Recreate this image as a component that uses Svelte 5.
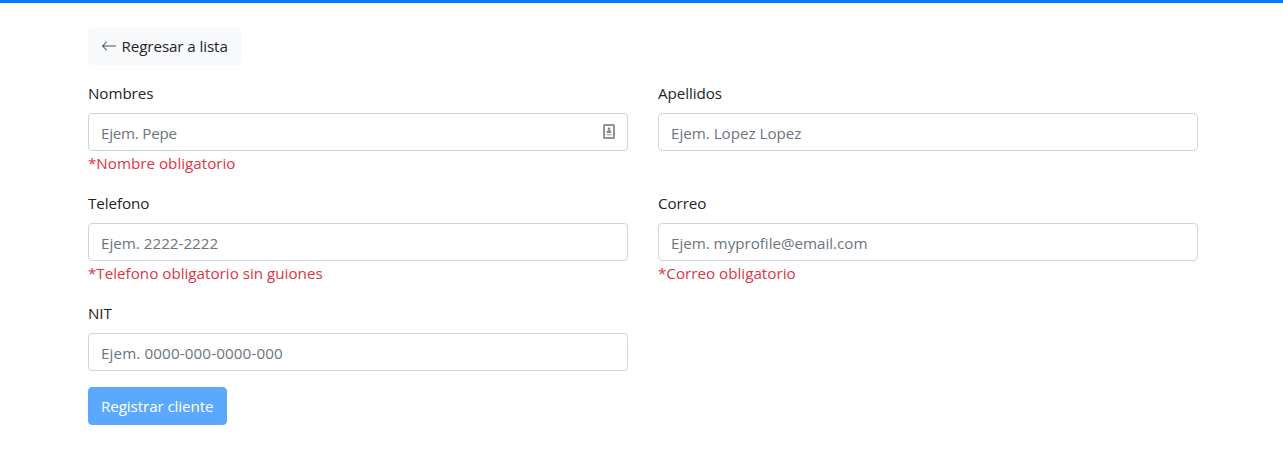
<script>
  const fields = [
    { id: 'nombres', label: 'Nombres', hint: 'Ejem. Pepe', track: -0.25, error: '*Nombre obligatorio', contact: true },
    { id: 'apellidos', label: 'Apellidos', hint: 'Ejem. Lopez Lopez', track: -0.02 },
    { id: 'telefono', label: 'Telefono', hint: 'Ejem. 2222-2222', track: 0, error: '*Telefono obligatorio sin guiones' },
    { id: 'correo', label: 'Correo', hint: 'Ejem. myprofile@email.com', track: -0.03, error: '*Correo obligatorio' },
    { id: 'nit', label: 'NIT', hint: 'Ejem. 0000-000-0000-000', track: 0.12 }
  ];
</script>

<div class="bar"></div>
<main>
  <button class="btn light" type="button">
    <svg width="16" height="16" viewBox="0 0 16 16" fill="currentColor" aria-hidden="true">
      <path fill-rule="evenodd" d="M15 8a.5.5 0 0 0-.5-.5H2.707l3.147-3.146a.5.5 0 1 0-.708-.708l-4 4a.5.5 0 0 0 0 .708l4 4a.5.5 0 0 0 .708-.708L2.707 8.5H14.5A.5.5 0 0 0 15 8z" />
    </svg>
    <span>Regresar a lista</span>
  </button>
  <form>
    <div class="grid">
      {#each fields as f}
        <div class="group">
          <label for={f.id}>{f.label}</label>
          <div class="control">
            <input id={f.id} placeholder={f.hint} style:letter-spacing="{f.track}px" />
            {#if f.contact}
              <svg class="contact" width="12" height="15" viewBox="0 0 12 15" aria-hidden="true">
                <rect x="1" y="1" width="10" height="13" rx="0.6" fill="#fff" stroke="#939393" stroke-width="2" />
                <circle cx="6" cy="4.8" r="1.3" fill="#858585" />
                <path d="M3.8 9V7.6Q4 6 6 6T8.2 7.6V9z" fill="#858585" />
                <path d="M3.5 10.7h5" stroke="#b5b5b5" stroke-width="1.4" />
              </svg>
            {/if}
          </div>
          {#if f.error}<div class="error">{f.error}</div>{/if}
        </div>
      {/each}
    </div>
    <button class="btn primary" type="button">Registrar cliente</button>
  </form>
</main>

<style>
  :global(body) {
    margin: 0;
    background: #fff;
    color: #212529;
    font: 15.2px/24px "Segoe UI", "Open Sans", "Noto Sans", sans-serif;
  }
  * { box-sizing: border-box; }
  .bar { height: 3px; background: #007bff; }
  main { width: 1110px; margin: 24px 0 0 88px; }
  .btn {
    display: flex;
    align-items: center;
    height: 38px;
    padding: 0 12px;
    border: 1px solid;
    border-radius: 4px;
    font: inherit;
    letter-spacing: -0.1px;
    white-space: nowrap;
  }
  .light { width: 153px; gap: 4.5px; color: #212529; background: #f8f9fa; border-color: #f8f9fa; }
  .light svg { flex: none; opacity: 0.8; }
  .primary { width: 139px; color: #fff; background: #5aa9ff; border-color: #5aa9ff; }
  .grid { display: grid; grid-template-columns: 1fr 1fr; column-gap: 30px; margin-top: 16px; }
  .group { margin-bottom: 16px; }
  label { display: block; height: 24px; margin-bottom: 8px; letter-spacing: -0.08px; }
  .control { position: relative; height: 38px; }
  input {
    display: block;
    width: 100%;
    height: 38px;
    padding: 7px 12px 5px;
    border: 1px solid #ced4da;
    border-radius: 4px;
    background: #fff;
    color: #495057;
    font: inherit;
  }
  input::placeholder { color: #6c757d; opacity: 1; }
  .contact { position: absolute; right: 13px; top: 11px; }
  .error { color: #dc3545; }
</style>
